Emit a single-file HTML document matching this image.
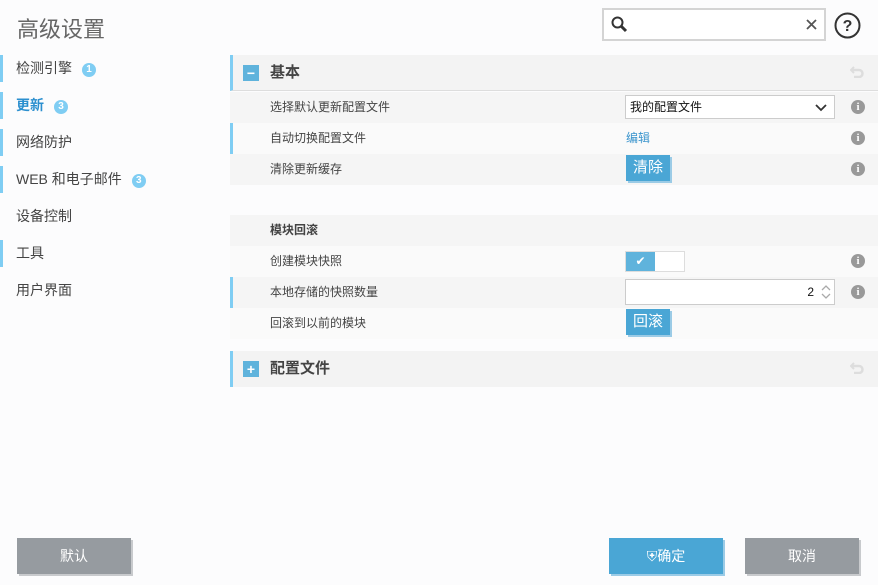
<!DOCTYPE html>
<html><head><meta charset="utf-8"><style>
*{margin:0;padding:0;box-sizing:border-box}
body{width:878px;height:585px;background:#fcfcfd;font-family:"Liberation Sans","Noto Sans CJK SC",sans-serif;color:#444;position:relative;overflow:hidden}
.a{position:absolute}
.title{left:17px;top:12px;font-size:22px;color:#666}
.nav{left:0;width:200px;height:27px;font-size:14px;color:#444;padding-left:16px;line-height:27px}
.nav.bar{border-left:3px solid #7fcdf3;padding-left:13px}
.badge{display:inline-block;width:14px;height:14px;border-radius:7px;background:#7fcdf3;color:#fff;font-size:10px;line-height:14px;text-align:center;font-weight:bold;vertical-align:1px;margin-left:10px}
.row{left:230px;width:648px;height:31px;font-size:12px;line-height:31px;padding-left:40px;color:#444}
.row.bar{border-left:3px solid #7fcdf3;padding-left:37px}
.row.bar .info{left:618px}
.hdr{left:230px;width:648px;height:36px;background:#f3f3f3;border-left:3px solid #7fcdf3;font-size:15px;font-weight:bold;line-height:36px;padding-left:37px;color:#444}
.sq{position:absolute;left:10px;top:10px;width:16px;height:16px;background:#5fb3dc;color:#fff;font-size:14px;line-height:16px;text-align:center}
.info{position:absolute;left:621px;top:8px;width:14px;height:14px;border-radius:7px;background:#999;color:#fff;font-size:11px;font-weight:bold;line-height:14px;text-align:center;font-family:"Liberation Serif",serif}
.btn{position:absolute;background:#4aa6d5;color:#fff;font-size:15px;text-align:center;box-shadow:2px 2px 0 #9bcbe6}
.fb{position:absolute;top:538px;height:36px;color:#fff;font-size:14px;line-height:36px;text-align:center;box-shadow:2px 2px 0 #c8cacd}
.undo{position:absolute;right:14px;top:11px}
</style></head><body>
<div class="a title">高级设置</div>
<div class="a" style="left:602px;top:8px;width:224px;height:33px;border:2px solid #d4d4d4;background:#fff">
<svg class="a" style="left:6px;top:5px" width="20" height="20" viewBox="0 0 20 20"><circle cx="7.5" cy="7.5" r="5" fill="none" stroke="#333" stroke-width="2"/><path d="M11 11l5 5" stroke="#333" stroke-width="3"/></svg>
<svg class="a" style="right:7px;top:9px" width="11" height="11" viewBox="0 0 11 11"><path d="M1 1l9 9M10 1l-9 9" stroke="#555" stroke-width="1.8"/></svg></div>
<svg class="a" style="left:834px;top:12px" width="27" height="27" viewBox="0 0 27 27"><circle cx="13.5" cy="13.5" r="12" fill="none" stroke="#333" stroke-width="2"/><text x="13.5" y="19" font-size="16" font-weight="bold" text-anchor="middle" fill="#333" font-family="Liberation Sans">?</text></svg>

<div class="a nav bar" style="top:55px">检测引擎<span class="badge">1</span></div>
<div class="a nav bar" style="top:92px;color:#2b8fcf;font-weight:bold">更新<span class="badge">3</span></div>
<div class="a nav bar" style="top:129px">网络防护</div>
<div class="a nav bar" style="top:166px">WEB 和电子邮件<span class="badge">3</span></div>
<div class="a nav" style="top:203px">设备控制</div>
<div class="a nav bar" style="top:240px">工具</div>
<div class="a nav" style="top:277px">用户界面</div>

<div class="a hdr" style="top:55px;border-bottom:1px solid #ddd"><div class="sq">−</div>基本<svg class="undo" width="14" height="12" viewBox="0 0 14 12"><path d="M4 1L1 4l3 3" fill="none" stroke="#ddd" stroke-width="2"/><path d="M1 4h8a3.5 3.5 0 0 1 0 7H4" fill="none" stroke="#ddd" stroke-width="2.5"/></svg></div>
<div class="a row" style="top:92px;background:#f5f5f5">选择默认更新配置文件
<div class="a" style="left:395px;top:3px;width:210px;height:24px;border:1px solid #ccc;background:#fff;line-height:22px;padding-left:4px;color:#111">我的配置文件<svg class="a" style="right:7px;top:8px" width="12" height="8" viewBox="0 0 12 8"><path d="M1 1l5 5 5-5" fill="none" stroke="#333" stroke-width="1.8"/></svg></div><div class="info">i</div></div>
<div class="a row bar" style="top:123px;background:#fafafa">自动切换配置文件<span class="a" style="left:393px;color:#3b95cd">编辑</span><div class="info">i</div></div>
<div class="a row" style="top:154px;background:#f5f5f5">清除更新缓存<div class="btn" style="left:396px;top:1px;width:44px;height:26px;line-height:26px">清除</div><div class="info">i</div></div>

<div class="a row" style="top:215px;background:#f5f5f5;font-weight:bold">模块回滚</div>
<div class="a row" style="top:246px;background:#fafafa">创建模块快照
<div class="a" style="left:395px;top:5px;width:60px;height:21px;border:1px solid #ddd;background:#fff"><div class="a" style="left:0;top:0;width:29px;height:19px;background:#5fb3dc;color:#fff;text-align:center;line-height:19px;font-size:12px">✔</div></div><div class="info">i</div></div>
<div class="a row bar" style="top:277px;background:#f5f5f5">本地存储的快照数量
<div class="a" style="left:392px;top:2px;width:210px;height:26px;border:1px solid #ccc;background:#fff;text-align:right;padding-right:20px;line-height:24px;color:#111">2<svg class="a" style="right:3px;top:4px" width="10" height="16" viewBox="0 0 10 16"><path d="M1 6l4-4 4 4M1 10l4 4 4-4" fill="none" stroke="#aaa" stroke-width="1.3"/></svg></div><div class="info">i</div></div>
<div class="a row" style="top:308px;background:#fafafa">回滚到以前的模块<div class="btn" style="left:396px;top:1px;width:44px;height:26px;line-height:26px">回滚</div></div>

<div class="a hdr" style="top:351px"><div class="sq">+</div>配置文件<svg class="undo" width="14" height="12" viewBox="0 0 14 12"><path d="M4 1L1 4l3 3" fill="none" stroke="#ddd" stroke-width="2"/><path d="M1 4h8a3.5 3.5 0 0 1 0 7H4" fill="none" stroke="#ddd" stroke-width="2.5"/></svg></div>

<div class="fb" style="left:17px;width:114px;background:#969ba0">默认</div>
<div class="fb" style="left:609px;width:114px;background:#4aa6d5;box-shadow:2px 2px 0 #9bcbe6">⛨确定</div>
<div class="fb" style="left:745px;width:114px;background:#969ba0">取消</div>
</body></html>
